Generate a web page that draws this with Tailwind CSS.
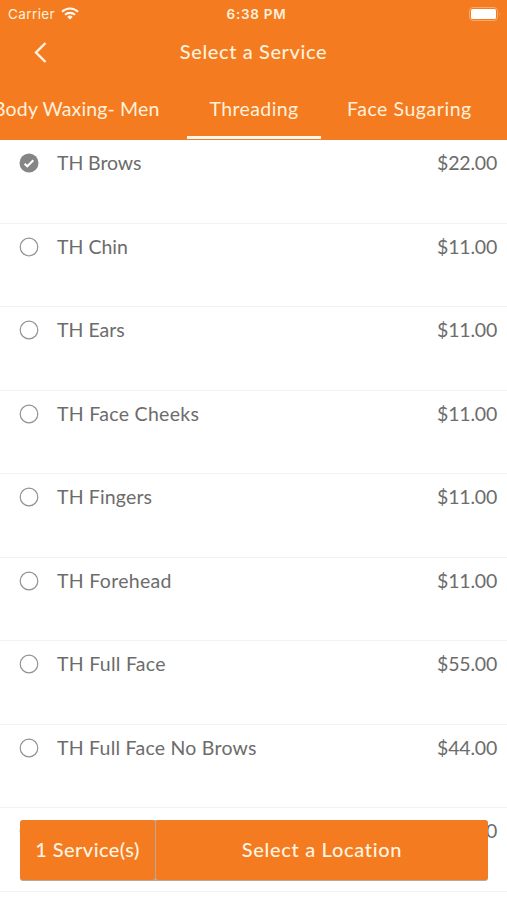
<!DOCTYPE html>
<html lang="en">
<head>
<meta charset="utf-8">
<title>Select a Service</title>
<script src="https://cdn.jsdelivr.net/npm/@tailwindcss/browser@4"></script>
</head>
<body class="w-[507px] h-[900px] overflow-hidden bg-white font-['Lato',sans-serif] text-[19.5px] leading-6 text-[#6c6c6c]">
<main class="relative w-[507px] h-[900px] overflow-hidden">
  <header class="h-[140px] bg-[#f47b20] text-[#fff1dc] flex flex-col">
    <div class="h-[28px] shrink-0 grid grid-cols-3 items-center pl-2 pr-[6px] font-['Inter',sans-serif] text-[13.5px]">
      <div class="flex items-center gap-[6px]"><span class="tracking-[0.4px]">Carrier</span>
        <svg class="w-[18px] h-[13px] -mt-px" viewBox="0 0 18 13" fill="none" stroke="#fff8ee" stroke-width="2.2"><path d="M1 4.7a11.6 11.6 0 0 1 16 0M4 7.8a7.2 7.2 0 0 1 10 0"/><path d="M9 12.6 6.3 9.9a3.9 3.9 0 0 1 5.4 0Z" fill="#fff8ee" stroke="none"/></svg>
      </div>
      <span class="text-center font-semibold tracking-[0.75px] pl-[4px]">6:38 PM</span>
      <svg class="justify-self-end w-[32px] h-[14px] -mt-px" viewBox="0 0 32 14"><rect x=".5" y=".5" width="28" height="13" rx="3.5" fill="none" stroke="#f9a96b"/><rect x="2" y="2" width="25" height="10" rx="1.5" fill="#fff"/><path d="M30 5q1.6 2 0 4Z" fill="#f9a96b"/></svg>
    </div>
    <div class="h-[48px] shrink-0 relative flex items-center justify-center pb-[2px]">
      <svg class="absolute left-[34px] top-[14px] w-[13px] h-[21px]" viewBox="0 0 13 21" fill="none" stroke="#fff4e4" stroke-width="2.4"><path d="M11.5 1 2 10.5 11.5 20"/></svg>
      <h1 class="text-[20px] font-medium tracking-[0.6px]">Select a Service</h1>
    </div>
    <nav class="flex h-[64px] pt-[21px] whitespace-nowrap">
      <div class="w-[187px] shrink-0 relative"><span class="-ml-[7px] tracking-[0.15px]">Body Waxing- Men</span></div>
      <div class="w-[134px] h-[42px] shrink-0 text-center border-b-[3px] border-[#fff8ee]"><span class="tracking-[0.4px]">Threading</span></div>
      <div class="shrink-0 pl-[26px]"><span class="tracking-[0.55px]">Face Sugaring</span></div>
    </nav>
  </header>
  <ul id="list"></ul>
  <div class="absolute left-[20px] top-[820px] w-[468px] h-[61px] flex gap-px bg-[#b5aa9c] rounded-[3px] overflow-hidden text-[#fff4e0] text-[20px] font-medium pb-px">
    <button class="w-[135px] bg-[#f47b20] rounded-[3px] tracking-[0.45px] pb-[2px]">1 Service(s)</button>
    <button class="flex-1 bg-[#f47b20] rounded-[3px] tracking-[0.68px] pb-[2px]">Select a Location</button>
  </div>
</main>
<script>
const rows = [
  ["TH Brows","$22.00","tracking-[-0.1px]"],
  ["TH Chin","$11.00","tracking-[0px]"],
  ["TH Ears","$11.00","tracking-[0px]"],
  ["TH Face Cheeks","$11.00","tracking-[0.3px]"],
  ["TH Fingers","$11.00","tracking-[0.15px]"],
  ["TH Forehead","$11.00","tracking-[0.3px]"],
  ["TH Full Face","$55.00","tracking-[0.27px]"],
  ["TH Full Face No Brows","$44.00","tracking-[0.23px]"],
  ["","$11.00",""]
];
const on = '<circle cx="10" cy="10" r="9.5" fill="#858585"/><path d="m5.6 10.7 2.7 2.6 6-6" fill="none" stroke="#fff" stroke-width="2.1"/>';
const off = '<circle cx="10" cy="10" r="8.8" fill="none" stroke="#929292" stroke-width="1.2"/>';
document.getElementById('list').innerHTML = rows.map((r,i)=>`<li class="h-[83.5px] flex items-start pt-[11px] pr-[10px] border-b border-[#f2f2f2]"><svg class="w-5 h-5 ml-[19px] mt-[2px] mr-[18px]" viewBox="0 0 20 20">${i?off:on}</svg><span class="flex-1 ${r[2]}">${r[0]}</span><span class="tracking-[-0.2px]">${r[1]}</span></li>`).join('');
</script>
</body>
</html>
